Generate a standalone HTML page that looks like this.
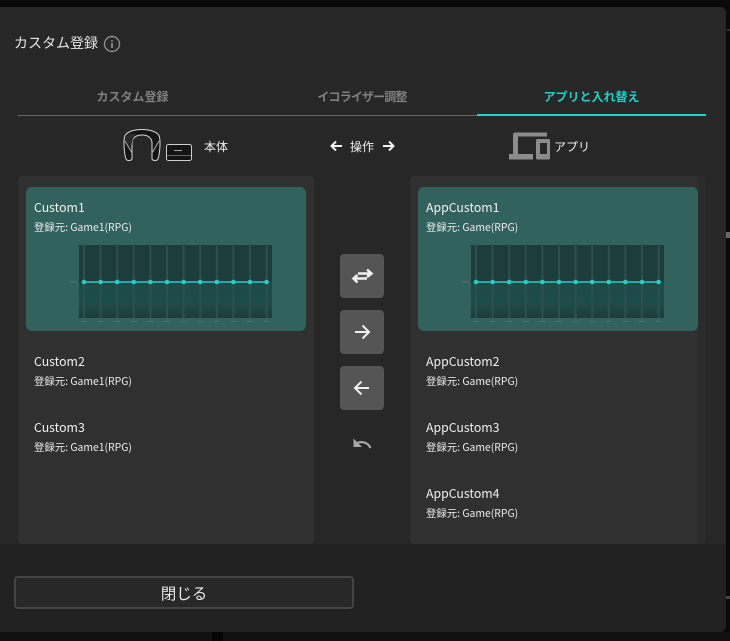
<!DOCTYPE html>
<html lang="ja">
<head>
<meta charset="utf-8">
<style>
html,body{margin:0;padding:0;width:730px;height:641px;overflow:hidden;background:#0a0a0a;font-family:"Noto Sans CJK JP","Liberation Sans",sans-serif;color:#e8e8e8}
.a{position:absolute;white-space:nowrap}
#modal{left:0;top:7px;width:726px;height:625px;background:#272727;border-radius:0 6px 6px 0;overflow:hidden}
#foot{left:0;top:537px;width:726px;height:88px;background:#212121}
.panel{position:absolute;top:176px;width:296px;height:368px;background:#303030;border-radius:4px}
.card{position:absolute;top:187px;width:280px;height:144px;background:#32625e;border-radius:6px}
.t1{font-size:12.3px;line-height:16px;color:#f0f0f0}
.t2{font-size:10.4px;line-height:14px;color:#ececec}
.tab{font-size:12px;font-weight:700;line-height:20px;top:87px;text-align:center;color:#7f7f7f}
.btn{position:absolute;left:340px;width:44px;height:44px;background:#555;border-radius:4px}
</style>
</head>
<body>
<div class="a" style="left:0;top:632px;width:730px;height:9px;background:#111"></div>
<div class="a" style="left:212px;top:632px;width:11px;height:9px;background:#050505"></div>
<div class="a" style="left:726px;top:232px;width:4px;height:6px;background:#666"></div>
<div class="a" style="left:726px;top:596px;width:4px;height:3px;background:#444"></div>
<div class="a" style="left:727px;top:29px;width:3px;height:2px;background:#333"></div>
<div class="a" id="modal"><div class="a" id="foot"></div></div>
<div class="a" style="left:14px;top:33px;font-size:14px;line-height:20px;color:#e6e6e6">カスタム登録</div>
<svg class="a" style="left:103px;top:35px" width="18" height="18" viewBox="0 0 18 18" fill="none"><circle cx="9" cy="9" r="7.5" stroke="#8a8a8a" stroke-width="1.4"/><rect x="8.2" y="8" width="1.6" height="5" fill="#9a9a9a"/><rect x="8.2" y="5" width="1.6" height="1.6" fill="#9a9a9a"/></svg>

<div class="a tab" style="left:18px;width:229px">カスタム登録</div>
<div class="a tab" style="left:247px;width:230px;letter-spacing:-0.85px">イコライザー調整</div>
<div class="a tab" style="left:477px;width:229px;color:#22cfc4">アプリと入れ替え</div>
<div class="a" style="left:18px;top:115px;width:459px;height:1px;background:#666"></div>
<div class="a" style="left:477px;top:114px;width:229px;height:2px;background:#22d3c8"></div>

<svg class="a" style="left:123px;top:128px" width="72" height="36" viewBox="0 0 72 36" fill="none">
<path d="M3 31 C1 25 0.500 14 1.500 9 C3 3 13 1.500 19 1.500 C25 1.500 35 3 36.500 9 C37.500 14 37 25 35 31 C34 33 30 33 29 31 L29 15 C29 10 25 7 19 7 C13 7 9 10 9 15 L9 31 C8 33 4 33 3 31Z" fill="#141414" stroke="#d8d8d8" stroke-width="1"/>
<path d="M2 13 L9 25 M36 13 L29 25" stroke="#aaa" stroke-width="1"/>
<path d="M2 11 L8 22 L9 14 Q10 9 14 6 Q6 4 2 9Z" fill="#2a2a2a"/>
<rect x="43.500" y="16.500" width="25" height="16" rx="2" fill="#141414" stroke="#cfcfcf" stroke-width="1"/>
<path d="M51 22.500H59" stroke="#aaa" stroke-width="1"/><path d="M44 27.500H68" stroke="#666" stroke-width="1"/>
</svg>
<div class="a" style="left:204px;top:139px;font-size:12px;line-height:16px;color:#eee">本体</div>

<svg class="a" style="left:329px;top:139px" width="15" height="14" viewBox="0 0 15 14" fill="none" stroke="#f2f2f2" stroke-width="2"><path d="M13 7H3M7 2.500L2.500 7L7 11.500"/></svg>
<div class="a" style="left:350px;top:139px;font-size:12px;line-height:16px;color:#eee">操作</div>
<svg class="a" style="left:381px;top:139px" width="15" height="14" viewBox="0 0 15 14" fill="none" stroke="#f2f2f2" stroke-width="2"><path d="M2 7H12M8 2.500L12.500 7L8 11.500"/></svg>

<svg class="a" style="left:509px;top:132px" width="42" height="28" viewBox="0 0 42 28" fill="#8c8c8c">
<path d="M38 0.500H6.500Q4 0.500 4 3V22H0V27.500H24V22H9V4.500H38Z"/>
<path fill-rule="evenodd" d="M28.500 7H39.500Q41 7 41 8.500V26Q41 27.500 39.500 27.500H28.500Q27 27.500 27 26V8.500Q27 7 28.500 7ZM31 11V22H38V11Z"/>
</svg>
<div class="a" style="left:554px;top:139px;font-size:12px;line-height:16px;color:#eee">アプリ</div>

<div class="panel" style="left:18px"></div>
<div class="panel" style="left:410px"></div>
<div class="a" style="left:698px;top:176px;width:8px;height:368px;background:#2b2b2b;border-radius:0 4px 4px 0"></div>
<div class="card" style="left:26px"></div>
<div class="card" style="left:418px"></div>

<div class="a t1" style="left:34px;top:199px">Custom1</div>
<div class="a t2" style="left:34px;top:220px">登録元: Game1(RPG)</div>
<div class="a t1" style="left:34px;top:353px">Custom2</div>
<div class="a t2" style="left:34px;top:374px">登録元: Game1(RPG)</div>
<div class="a t1" style="left:34px;top:419px">Custom3</div>
<div class="a t2" style="left:34px;top:440px">登録元: Game1(RPG)</div>

<div class="a t1" style="left:426px;top:199px">AppCustom1</div>
<div class="a t2" style="left:426px;top:220px">登録元: Game(RPG)</div>
<div class="a t1" style="left:426px;top:353px">AppCustom2</div>
<div class="a t2" style="left:426px;top:374px">登録元: Game(RPG)</div>
<div class="a t1" style="left:426px;top:419px">AppCustom3</div>
<div class="a t2" style="left:426px;top:440px">登録元: Game(RPG)</div>
<div class="a t1" style="left:426px;top:485px">AppCustom4</div>
<div class="a t2" style="left:426px;top:506px">登録元: Game(RPG)</div>

<svg class="a" style="left:66px;top:240px" width="210" height="85" viewBox="0 0 210 85">
<defs><linearGradient id="g" x1="0" y1="0" x2="0" y2="1"><stop offset="0" stop-color="#1e4a47"/><stop offset="0.6" stop-color="#1e4c48"/><stop offset="1" stop-color="#1d3c3b"/></linearGradient></defs>
<rect x="13" y="4" width="193" height="38" fill="#1f3c3c"/>
<rect x="13" y="42" width="193" height="36" fill="url(#g)"/>
<rect x="13" y="4" width="193" height="1" fill="#36605c"/>
<g fill="#2c504d">
<rect x="17" y="4" width="2" height="74"/><rect x="33.600" y="4" width="2" height="74"/><rect x="50.200" y="4" width="2" height="74"/><rect x="66.800" y="4" width="2" height="74"/><rect x="83.400" y="4" width="2" height="74"/><rect x="100" y="4" width="2" height="74"/><rect x="116.600" y="4" width="2" height="74"/><rect x="133.200" y="4" width="2" height="74"/><rect x="149.800" y="4" width="2" height="74"/><rect x="166.400" y="4" width="2" height="74"/><rect x="183" y="4" width="2" height="74"/><rect x="199.600" y="4" width="2" height="74"/>
</g>
<rect x="3" y="41.500" width="8" height="1" fill="#4f7672"/>
<path d="M18 42H201" stroke="#25cfc4" stroke-width="1.500"/>
<g fill="#25cfc4">
<circle cx="18" cy="42" r="2.300"/><circle cx="34.600" cy="42" r="2.300"/><circle cx="51.200" cy="42" r="2.300"/><circle cx="67.800" cy="42" r="2.300"/><circle cx="84.400" cy="42" r="2.300"/><circle cx="101" cy="42" r="2.300"/><circle cx="117.600" cy="42" r="2.300"/><circle cx="134.200" cy="42" r="2.300"/><circle cx="150.800" cy="42" r="2.300"/><circle cx="167.400" cy="42" r="2.300"/><circle cx="184" cy="42" r="2.300"/><circle cx="200.600" cy="42" r="2.300"/>
</g>
<g fill="#4f7672">
<rect x="16" y="81" width="4" height="1"/><rect x="32.600" y="81" width="4" height="1"/><rect x="48.200" y="81" width="6" height="1"/><rect x="64.800" y="81" width="6" height="1"/><rect x="81.400" y="81" width="6" height="1"/><rect x="98" y="81" width="6" height="1"/><rect x="115.600" y="81" width="4" height="1"/><rect x="132.200" y="81" width="4" height="1"/><rect x="148.800" y="81" width="4" height="1"/><rect x="165.400" y="81" width="4" height="1"/><rect x="181" y="81" width="6" height="1"/><rect x="197.600" y="81" width="6" height="1"/>
</g>
</svg>
<svg class="a" style="left:458px;top:240px" width="210" height="85" viewBox="0 0 210 85">
<defs><linearGradient id="h" x1="0" y1="0" x2="0" y2="1"><stop offset="0" stop-color="#1e4a47"/><stop offset="0.6" stop-color="#1e4c48"/><stop offset="1" stop-color="#1d3c3b"/></linearGradient></defs>
<rect x="13" y="4" width="193" height="38" fill="#1f3c3c"/>
<rect x="13" y="42" width="193" height="36" fill="url(#h)"/>
<rect x="13" y="4" width="193" height="1" fill="#36605c"/>
<g fill="#2c504d">
<rect x="17" y="4" width="2" height="74"/><rect x="33.600" y="4" width="2" height="74"/><rect x="50.200" y="4" width="2" height="74"/><rect x="66.800" y="4" width="2" height="74"/><rect x="83.400" y="4" width="2" height="74"/><rect x="100" y="4" width="2" height="74"/><rect x="116.600" y="4" width="2" height="74"/><rect x="133.200" y="4" width="2" height="74"/><rect x="149.800" y="4" width="2" height="74"/><rect x="166.400" y="4" width="2" height="74"/><rect x="183" y="4" width="2" height="74"/><rect x="199.600" y="4" width="2" height="74"/>
</g>
<rect x="3" y="41.500" width="8" height="1" fill="#4f7672"/>
<path d="M18 42H201" stroke="#25cfc4" stroke-width="1.500"/>
<g fill="#25cfc4">
<circle cx="18" cy="42" r="2.300"/><circle cx="34.600" cy="42" r="2.300"/><circle cx="51.200" cy="42" r="2.300"/><circle cx="67.800" cy="42" r="2.300"/><circle cx="84.400" cy="42" r="2.300"/><circle cx="101" cy="42" r="2.300"/><circle cx="117.600" cy="42" r="2.300"/><circle cx="134.200" cy="42" r="2.300"/><circle cx="150.800" cy="42" r="2.300"/><circle cx="167.400" cy="42" r="2.300"/><circle cx="184" cy="42" r="2.300"/><circle cx="200.600" cy="42" r="2.300"/>
</g>
<g fill="#4f7672">
<rect x="16" y="81" width="4" height="1"/><rect x="32.600" y="81" width="4" height="1"/><rect x="48.200" y="81" width="6" height="1"/><rect x="64.800" y="81" width="6" height="1"/><rect x="81.400" y="81" width="6" height="1"/><rect x="98" y="81" width="6" height="1"/><rect x="115.600" y="81" width="4" height="1"/><rect x="132.200" y="81" width="4" height="1"/><rect x="148.800" y="81" width="4" height="1"/><rect x="165.400" y="81" width="4" height="1"/><rect x="181" y="81" width="6" height="1"/><rect x="197.600" y="81" width="6" height="1"/>
</g>
</svg>

<div class="btn" style="top:254px"><svg width="44" height="44" viewBox="0 0 44 44" fill="none" stroke="#f0f0f0" stroke-width="2.500"><path d="M18 19.500H31M27 15.500L31.500 19.500L27 23"/><path d="M27 24.500H15M17.500 21L13.500 24.500L17.500 28.500"/></svg></div>
<div class="btn" style="top:310px"><svg width="44" height="44" viewBox="0 0 44 44" fill="none" stroke="#f0f0f0" stroke-width="2"><path d="M15 22H29M22.500 15.500L29 22L22.500 28.500"/></svg></div>
<div class="btn" style="top:366px"><svg width="44" height="44" viewBox="0 0 44 44" fill="none" stroke="#f0f0f0" stroke-width="2"><path d="M29 22H15M21.500 15.500L15 22L21.500 28.500"/></svg></div>
<svg class="a" style="left:340px;top:422px" width="44" height="44" viewBox="0 0 44 44" fill="none"><path d="M13.500 16.500V25H22Z" fill="#a8a8a8"/><path d="M15 23C18 19 27 18.500 30.500 26" stroke="#a8a8a8" stroke-width="2.200"/></svg>

<div class="a" style="left:14px;top:576px;width:336px;height:29px;border:2px solid #444;border-radius:4px;background:#282828;text-align:center;font-size:15.500px;line-height:30px;color:#e8e8e8">閉じる</div>
</body>
</html>
